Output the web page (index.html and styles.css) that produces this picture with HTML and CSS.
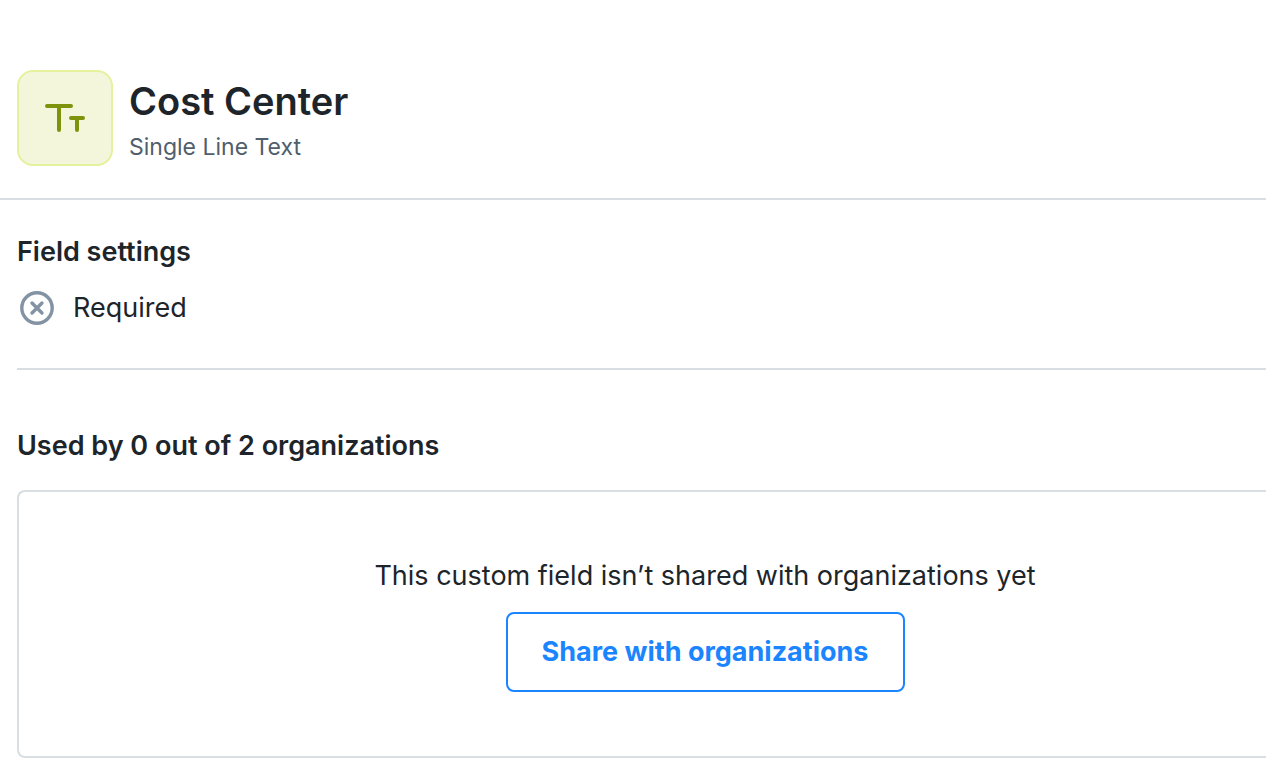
FILE: index.html
```html
<!DOCTYPE html>
<html lang="en">
<head>
<meta charset="utf-8">
<title>Cost Center</title>
<link rel="stylesheet" href="styles.css">
</head>
<body>
<header class="header">
  <div class="field-icon">
    <svg width="48" height="48" viewBox="0 0 48 48" fill="none" stroke="#7d930c" stroke-width="4" stroke-linecap="round" aria-hidden="true">
      <path d="M6 12H30M18 12V36M30 24H42M36 24V36"/>
    </svg>
  </div>
  <div class="heading">
    <h1 class="title">Cost Center</h1>
    <p class="subtitle">Single Line Text</p>
  </div>
</header>
<main class="content">
  <section class="settings">
    <h2 class="section-title">Field settings</h2>
    <div class="setting">
      <svg class="setting-icon" width="40" height="40" viewBox="0 0 40 40" fill="none" stroke="#8393a3" stroke-width="3.4" stroke-linecap="round" aria-hidden="true">
        <circle cx="20" cy="20" r="15.2"/>
        <path d="M15 15L25 25M25 15L15 25"/>
      </svg>
      <span>Required</span>
    </div>
  </section>
  <section class="usage">
    <h2 class="section-title">Used by 0 out of 2 organizations</h2>
    <div class="empty-state">
      <p class="message">This custom field isn’t shared with organizations yet</p>
      <button class="share-button" type="button">Share with organizations</button>
    </div>
  </section>
</main>
</body>
</html>
```
FILE: styles.css
```css
* {
  box-sizing: border-box;
}

body {
  margin: 0;
  background: #fff;
  color: #1d252b;
  font-family: Inter, "Liberation Sans", sans-serif;
  font-size: 27px;
  line-height: 40px;
}

h1, h2, p {
  margin: 0;
}

.header {
  display: flex;
  gap: 16px;
  padding: 70px 17px 32px;
  border-bottom: 2px solid #d9dee2;
}

.field-icon {
  display: flex;
  align-items: center;
  justify-content: center;
  width: 96px;
  height: 96px;
  border: 2px solid #e5f19c;
  border-radius: 16px;
  background: #f4f6dc;
}

.heading {
  padding-top: 7px;
}

.title {
  font-size: 38px;
  font-weight: 600;
  line-height: 48px;
}

.subtitle {
  margin-top: 4px;
  color: #515e6b;
  font-size: 23px;
  line-height: 36px;
}

.content {
  padding: 32px 0 22px 17px;
}

.settings {
  padding-bottom: 40px;
  border-bottom: 2px solid #d9dee2;
}

.section-title {
  font-size: 27px;
  font-weight: 600;
  line-height: 40px;
}

.setting {
  display: flex;
  align-items: center;
  gap: 16px;
  margin-top: 16px;
}

.usage {
  padding-top: 56px;
}

.empty-state {
  display: flex;
  flex-direction: column;
  align-items: center;
  gap: 16px;
  margin-top: 24px;
  padding: 64px 0 64px 125px;
  border: 2px solid #d9dee2;
  border-right: none;
  border-radius: 8px 0 0 8px;
}

.share-button {
  height: 80px;
  padding: 0 34px;
  border: 2px solid #1a85ff;
  border-radius: 8px;
  background: #fff;
  color: #1a85ff;
  font: inherit;
  font-weight: 700;
}
```
